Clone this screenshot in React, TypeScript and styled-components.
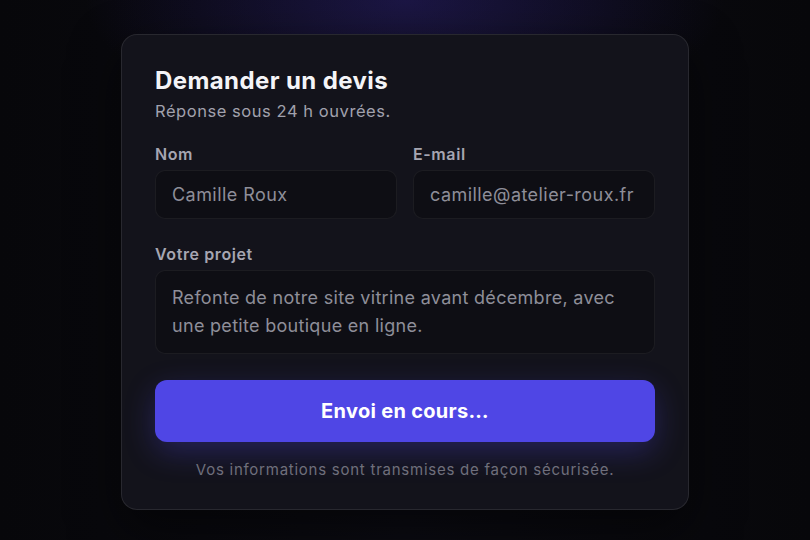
import React from 'react';
import styled, { createGlobalStyle } from 'styled-components';

const GlobalStyle = createGlobalStyle`
  * { box-sizing: border-box; }
  html, body {
    margin: 0;
    padding: 0;
    background: #08080c;
    font-family: Inter, "Noto Sans", sans-serif;
  }
`;

export default function App() {
  return (
    <>
      <GlobalStyle />
      <Page>
        <Card>
          <Title>Demander un devis</Title>
          <Subtitle>Réponse sous 24 h ouvrées.</Subtitle>
          <Row>
            <Field>
              <Label>Nom</Label>
              <Input defaultValue="Camille Roux" readOnly />
            </Field>
            <Field>
              <Label>E-mail</Label>
              <Input defaultValue="camille@atelier-roux.fr" readOnly />
            </Field>
          </Row>
          <Field>
            <Label>Votre projet</Label>
            <TextArea
              rows={2}
              readOnly
              defaultValue="Refonte de notre site vitrine avant décembre, avec une petite boutique en ligne."
            />
          </Field>
          <SubmitBtn type="button">Envoi en cours…</SubmitBtn>
          <Note>Vos informations sont transmises de façon sécurisée.</Note>
        </Card>
      </Page>
    </>
  );
}

const Page = styled.div`
  width: 810px;
  height: 540px;
  display: flex;
  justify-content: center;
  align-items: flex-start;
  padding-top: 34px;
  background:
    radial-gradient(ellipse 320px 130px at 50% 0%, rgba(55, 40, 150, 0.38), transparent 100%),
    linear-gradient(90deg, #07070a 0%, #0b0b12 50%, #07070a 100%);
`;

const Card = styled.div`
  width: 568px;
  display: flex;
  flex-direction: column;
  padding: 31px 33px 29px;
  background: #13131b;
  border: 1px solid rgba(255, 255, 255, 0.09);
  border-radius: 16px;
  box-shadow: 0 20px 50px rgba(0, 0, 0, 0.5);
`;

const Title = styled.h1`
  margin: 0;
  font-size: 24px;
  line-height: 30px;
  font-weight: 700;
  color: #f4f4f7;
  letter-spacing: 0.4px;
`;

const Subtitle = styled.p`
  margin: 4px 0 0;
  font-size: 16.5px;
  line-height: 22px;
  letter-spacing: 0.55px;
  color: #a1a1ad;
`;

const Row = styled.div`
  display: grid;
  grid-template-columns: 1fr 1fr;
  gap: 16px;
  margin-top: 22px;
  margin-bottom: 25px;
`;

const Field = styled.div`
  display: flex;
  flex-direction: column;
  gap: 6px;
`;

const Label = styled.label`
  font-size: 16px;
  line-height: 20px;
  font-weight: 600;
  letter-spacing: 0.6px;
  color: #a6a6b2;
`;

const Input = styled.input`
  width: 100%;
  height: 49px;
  padding: 0 16px;
  background: #0e0e14;
  border: 1px solid rgba(255, 255, 255, 0.06);
  border-radius: 10px;
  font-family: inherit;
  font-size: 18px;
  letter-spacing: 0.45px;
  color: #8e8e99;
  outline: none;
`;

const TextArea = styled.textarea`
  width: 100%;
  height: 84px;
  padding: 13px 16px;
  background: #0e0e14;
  border: 1px solid rgba(255, 255, 255, 0.06);
  border-radius: 10px;
  font-family: inherit;
  font-size: 18px;
  line-height: 28px;
  letter-spacing: 0.3px;
  color: #8e8e99;
  resize: none;
  outline: none;
`;

const SubmitBtn = styled.button`
  flex-shrink: 0;
  margin-top: 26px;
  height: 62px;
  border: none;
  border-radius: 12px;
  background: #4f46e5;
  color: #ffffff;
  font-family: inherit;
  font-size: 20px;
  font-weight: 700;
  letter-spacing: 0.3px;
  box-shadow: 0 10px 30px rgba(79, 70, 229, 0.3);
`;

const Note = styled.p`
  margin: 18px 0 0;
  text-align: center;
  font-size: 15px;
  line-height: 20px;
  letter-spacing: 0.75px;
  color: #6f6f7c;
`;
